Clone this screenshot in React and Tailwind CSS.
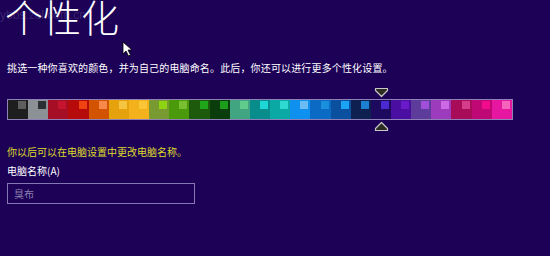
import React from "react";

const swatches = [
  { bg: "bg-[#1e1e1e]", sq: "bg-[#5e5e5e]" },
  { bg: "bg-[#8c9196]", sq: "bg-[#2c3035]" },
  { bg: "bg-[#a60e26]", sq: "bg-[#c4142e]" },
  { bg: "bg-[#b70b0b]", sq: "bg-[#ef4312]" },
  { bg: "bg-[#d25300]", sq: "bg-[#f7894a]" },
  { bg: "bg-[#e6a20c]", sq: "bg-[#f5c542]" },
  { bg: "bg-[#f3b21b]", sq: "bg-[#f8c636]" },
  { bg: "bg-[#789a30]", sq: "bg-[#8fd412]" },
  { bg: "bg-[#4a9a0c]", sq: "bg-[#78c030]" },
  { bg: "bg-[#1d5a0c]", sq: "bg-[#21a51b]" },
  { bg: "bg-[#0a3d0b]", sq: "bg-[#1b9f1a]" },
  { bg: "bg-[#42a581]", sq: "bg-[#60cc8b]" },
  { bg: "bg-[#088c8c]", sq: "bg-[#1ed6d6]" },
  { bg: "bg-[#0aa9a4]", sq: "bg-[#2fdad0]" },
  { bg: "bg-[#0e90ee]", sq: "bg-[#6cbcf4]" },
  { bg: "bg-[#0a6ac4]", sq: "bg-[#1a90dc]" },
  { bg: "bg-[#0b4f9f]", sq: "bg-[#1ba3f4]" },
  { bg: "bg-[#0d2050]", sq: "bg-[#1c80d0]" },
  { bg: "bg-[#1d0a5e]", sq: "bg-[#4a2ad0]" },
  { bg: "bg-[#4a0ea0]", sq: "bg-[#6a1ac8]" },
  { bg: "bg-[#5e3c9c]", sq: "bg-[#a050d8]" },
  { bg: "bg-[#9c3cbc]", sq: "bg-[#cc6ae6]" },
  { bg: "bg-[#a80c58]", sq: "bg-[#d43c8c]" },
  { bg: "bg-[#c00874]", sq: "bg-[#f00c8c]" },
  { bg: "bg-[#e616a0]", sq: "bg-[#f563bc]" },
];

const font = "font-['Noto_Sans_CJK_SC','Noto_Sans',sans-serif]";

const App = () => {
  return (
    <div
      className={`relative w-[550px] h-[256px] overflow-hidden bg-[#1c0157] pl-[7px] ${font}`}
    >
      {/* watermark */}
      <div className="absolute left-0 top-[6px] text-[12px] text-white/15 font-['Liberation_Sans',sans-serif]">
        ybbs.zol.com.cn
      </div>

      <h1 className="text-[38px] leading-[38px] font-light text-white mt-[-3px] ml-[-2px]">
        个性化
      </h1>

      <p className="mt-[26px] text-[10px] leading-[14px] text-white tracking-[0.15px]">
        挑选一种你喜欢的颜色，并为自己的电脑命名。此后，你还可以进行更多个性化设置。
      </p>

      <div className="relative mt-[24px] w-[506px]">
        <div className="flex h-[21px] border border-[#8f80b8]">
          {swatches.map((s, i) => (
            <div
              key={i}
              className={`flex-1 flex justify-end items-start pt-[1px] pr-[2px] ${s.bg}`}
            >
              <div className={`w-[8px] h-[8px] ${s.sq}`} />
            </div>
          ))}
        </div>

        {/* selection arrows */}
        <svg
          className="absolute left-[367px] top-[-12px]"
          width="15"
          height="11"
          viewBox="0 0 15 11"
        >
          <path
            d="M1.5 1.5 H13.5 V3.5 L7.5 9.5 L1.5 3.5 Z"
            fill="#2c2c22"
            stroke="#c8c8c8"
            strokeWidth="1.2"
            strokeLinejoin="round"
          />
        </svg>
        <svg
          className="absolute left-[367px] top-[22px]"
          width="15"
          height="11"
          viewBox="0 0 15 11"
        >
          <path
            d="M1.5 9.5 H13.5 V7.5 L7.5 1.5 L1.5 7.5 Z"
            fill="#2c2c22"
            stroke="#c8c8c8"
            strokeWidth="1.2"
            strokeLinejoin="round"
          />
        </svg>
      </div>

      <p className="mt-[25px] text-[10px] leading-[14px] text-[#dedb2a]">
        你以后可以在电脑设置中更改电脑名称。
      </p>

      <p className="mt-[5px] text-[10px] leading-[14px] text-white">
        电脑名称(A)
      </p>

      <div className="mt-[5px] w-[188px] h-[21px] border-[1.5px] border-[#8677b4] flex items-center px-[6px]">
        <span className="text-[10px] text-[#8a7fae]">臭布</span>
      </div>

      {/* mouse pointer */}
      <svg
        className="absolute left-[122px] top-[41px]"
        width="11"
        height="16"
        viewBox="0 0 11 16"
      >
        <path
          d="M1 1 V13 L4 10 L6.5 15 L8.5 14 L6 9 H10 Z"
          fill="#ffffff"
          stroke="#000000"
          strokeWidth="0.8"
          strokeLinejoin="round"
        />
      </svg>
    </div>
  );
};

export default App;
